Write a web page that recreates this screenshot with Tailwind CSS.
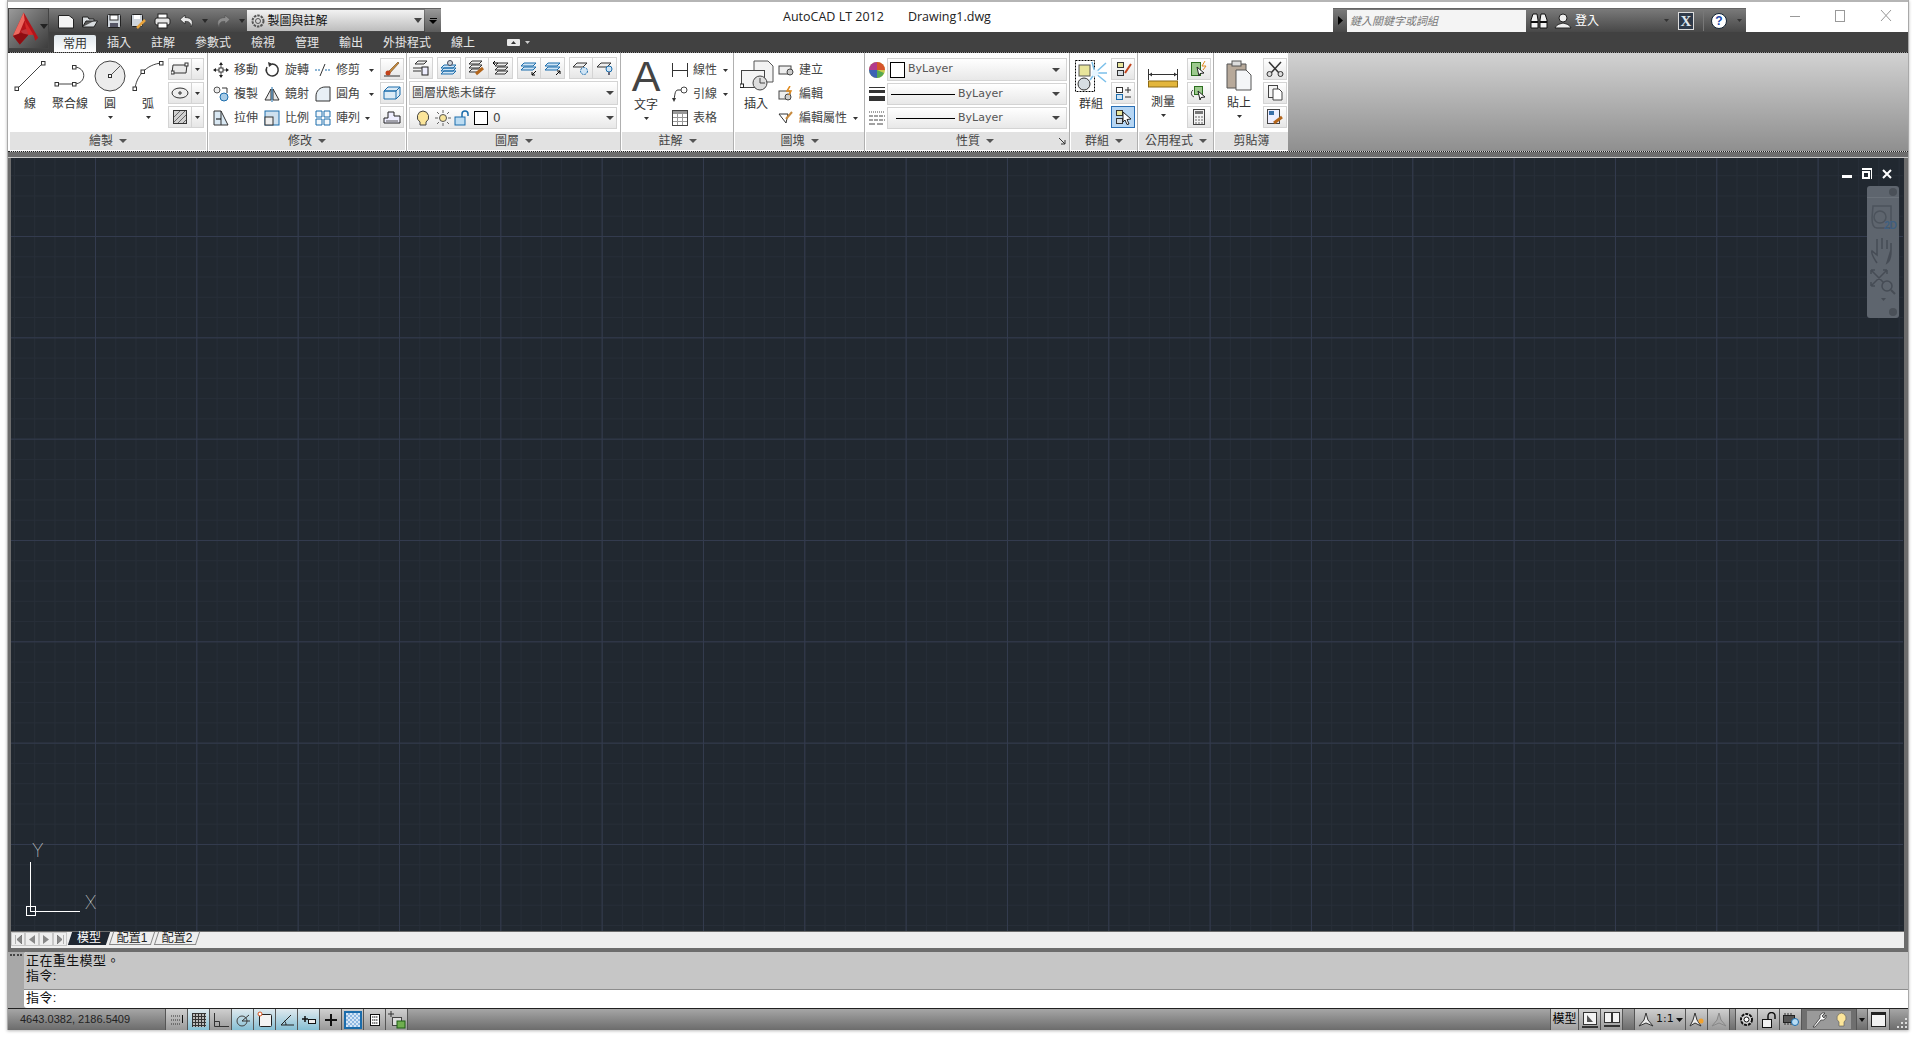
<!DOCTYPE html>
<html lang="zh-Hant">
<head>
<meta charset="UTF-8" />
<title>AutoCAD LT 2012</title>
<script src="https://cdn.jsdelivr.net/npm/@tailwindcss/browser@4"></script>
</head>
<body class="w-[1916px] h-[1038px] overflow-hidden bg-white pl-[7px] font-['Liberation_Sans','Noto_Sans_CJK_TC',sans-serif] text-[12px] text-[#333]">
<div class="w-[1902px] h-[1030px] flex flex-col border-x border-[#a9a9a9] bg-[#6c6c6c] shadow-[0_1px_3px_#bbb] relative">

  <!-- app button sits over the title and the tab row -->
  <div class="absolute left-0 top-[8px] w-[41px] h-[41px] z-10 bg-gradient-to-br from-[#9a9a9a] to-[#3d3d3d] border border-[#444] flex items-center pl-[3px]">
    <svg width="28" height="36" viewBox="0 0 28 36"><path d="M12 1L1 25L8 34L17 24H22L24 30L27 27Z" fill="#b5141a"/><path d="M12 1L1 25L6 26L13 9Z" fill="#ec6a60"/><path d="M9 20L17 17L21 24L13 25Z" fill="#f2f2f2" opacity=".15"/><path d="M1 25L8 34L17 24L9 22Z" fill="#8d0d12"/><path d="M13 9L22 24H17L14 16Z" fill="#d42a2a"/></svg>
    <svg width="8" height="5" class="ml-[1px] mb-[4px]"><path d="M0 0H8L4 5Z" fill="#222"/></svg>
  </div>

  <!-- title bar -->
  <header class="h-[32px] bg-white border-t-2 border-[#b5b5b5] flex shrink-0">
    <div class="ml-[41px] mt-[6px] h-[24px] w-[392px] bg-gradient-to-b from-[#7a7a7a] to-[#454545] border-t border-[#666] flex items-center">
      <div class="flex items-center w-[198px] pl-[9px] gap-[8px]">
        <svg width="16" height="16" viewBox="0 0 16 16"><path d="M.5 2.500H11L15.500 6V15H.5Z" fill="#f4f4f4" stroke="#222"/></svg>
        <svg width="16" height="16" viewBox="0 0 16 16"><path d="M.5 14V4H6L7 6H12V8H4L.5 14H12L15.500 8H12" fill="#d8dcdf" stroke="#222"/></svg>
        <svg width="16" height="16" viewBox="0 0 16 16"><rect x="1.500" y="1.500" width="13" height="13" rx="1" fill="#cfd5dc" stroke="#222"/><rect x="4" y="2" width="8" height="5" fill="#fff" stroke="#333"/><rect x="4" y="10" width="8" height="4" fill="#556"/></svg>
        <svg width="16" height="16" viewBox="0 0 16 16"><rect x="1.500" y="1.500" width="11" height="12" rx="1" fill="#cfd5dc" stroke="#222"/><rect x="4" y="2" width="6" height="4" fill="#fff"/><path d="M7 15L15 7" stroke="#e8a33c" stroke-width="2.500"/></svg>
        <svg width="17" height="16" viewBox="0 0 17 16"><rect x="4" y="1" width="9" height="5" fill="#fff" stroke="#222"/><rect x="1" y="5" width="15" height="7" rx="2" fill="#e4e4e4" stroke="#222"/><rect x="4" y="10" width="9" height="5" fill="#fff" stroke="#222"/></svg>
        <svg width="15" height="14" viewBox="0 0 15 14"><path d="M6 1L1 5.500L6 10V7.500C10 7 12 9 12 13C15 8 13 3.500 6 3.500Z" fill="#e8e8e8" stroke="#222" stroke-width=".7"/></svg>
        <svg width="6" height="4"><path d="M0 0H6L3 4Z" fill="#2a2a2a"/></svg>
        <svg width="15" height="14" viewBox="0 0 15 14"><path d="M9 1L14 5.500L9 10V7.500C5 7 3 9 3 13C0 8 2 3.500 9 3.500Z" fill="#8c8c8c" stroke="#555" stroke-width=".7"/></svg>
        <svg width="6" height="4"><path d="M0 0H6L3 4Z" fill="#2a2a2a"/></svg>
      </div>
      <div class="w-[178px] h-[21px] bg-gradient-to-b from-[#f2f2f2] to-[#bdbdbd] flex items-center pl-[3px]">
        <svg width="16" height="16" viewBox="0 0 16 16"><circle cx="8" cy="8" r="5.500" fill="none" stroke="#555" stroke-width="2" stroke-dasharray="2.500 1"/><circle cx="8" cy="8" r="2.500" fill="none" stroke="#555"/></svg>
        <span class="ml-[2px] text-[#111] grow">製圖與註解</span>
        <svg width="8" height="5" class="mr-[2px]"><path d="M0 0H8L4 5Z" fill="#444"/></svg>
      </div>
      <div class="w-[16px] h-[23px] bg-gradient-to-b from-[#999] to-[#5c5c5c] flex flex-col items-center justify-center gap-[1px] ml-[1px]">
        <div class="w-[7px] h-[1px] bg-black"></div>
        <svg width="8" height="4"><path d="M0 0H8L4 4Z" fill="#000"/></svg>
      </div>
    </div>
    <div class="ml-[342px] mt-[5px] text-[#222] font-['Open_Sans',sans-serif] text-[12.5px] leading-[20px]">AutoCAD LT 2012</div>
    <div class="ml-[24px] mt-[5px] text-[#222] font-['Open_Sans',sans-serif] text-[12.5px] leading-[20px]">Drawing1.dwg</div>
    <div class="ml-auto mt-[6px] w-[413px] h-[24px] bg-gradient-to-b from-[#7a7a7a] to-[#484848] border-t border-[#666] flex items-center">
      <div class="w-[14px] flex justify-center"><svg width="5" height="9"><path d="M0 0L5 4.500L0 9Z" fill="#000"/></svg></div>
      <div class="w-[179px] h-[22px] bg-[#f4f4f4] italic text-[#777] pl-[3px] leading-[22px] text-[11px]">鍵入關鍵字或詞組</div>
      <svg width="18" height="16" viewBox="0 0 18 16" class="ml-[4px]"><path d="M1 15V7L3 1H7L8 7V15ZM10 15V7L11 1H15L17 7V15Z" fill="#f2f2f2" stroke="#111"/><path d="M1 9H8M10 9H17" stroke="#111" stroke-width="2"/></svg>
      <svg width="18" height="18" viewBox="0 0 18 18" class="ml-[6px]"><circle cx="9" cy="6" r="4" fill="#eee" stroke="#222"/><path d="M1 16C3 12 6 12 9 11C12 12 15 12 17 16Z" fill="#eee" stroke="#222"/></svg>
      <span class="ml-[3px] text-[#fff] text-[12px]">登入</span>
      <svg width="5" height="3" class="ml-[65px]"><path d="M0 0H5L2.500 3Z" fill="#333"/></svg>
      <div class="ml-[9px] w-[16px] h-[18px] bg-[#2f3a4a] border border-[#ddd] text-[#dfe6ee] font-bold text-[15px] leading-[16px] text-center font-['Liberation_Serif',serif]">X</div>
      <div class="ml-[9px] w-px h-[20px] bg-[#777]"></div>
      <div class="ml-[7px] w-[16px] h-[16px] rounded-full bg-white border border-[#123] text-[#1c47a8] font-bold text-[12px] leading-[14px] text-center">?</div>
      <svg width="5" height="3" class="ml-[10px]"><path d="M0 0H5L2.500 3Z" fill="#333"/></svg>
    </div>
    <div class="ml-[41px] mr-[11px] mt-[4px] flex">
      <svg width="45" height="20" viewBox="0 0 45 20"><path d="M3 10.500H13" stroke="#999"/></svg>
      <svg width="45" height="20" viewBox="0 0 45 20"><rect x="3.500" y="4.500" width="9" height="11" fill="none" stroke="#999"/></svg>
      <svg width="20" height="20" viewBox="0 0 20 20"><path d="M4 4L14 15M14 4L4 15" stroke="#999"/></svg>
    </div>
  </header>

  <!-- tab row -->
  <nav class="h-[20px] bg-[#414141] flex shrink-0 text-[#e6e6e6] text-[12px] leading-[22px]">
    <div class="ml-[46px] mt-[3px] w-[42px] h-[17px] leading-[18px] text-center bg-gradient-to-b from-[#dfe7ec] to-white text-[#333] rounded-t-[2px]">常用</div>
    <div class="ml-[11px] w-[24px]">插入</div>
    <div class="ml-[20px] w-[24px]">註解</div>
    <div class="ml-[20px] w-[36px]">參數式</div>
    <div class="ml-[20px] w-[24px]">檢視</div>
    <div class="ml-[20px] w-[24px]">管理</div>
    <div class="ml-[20px] w-[24px]">輸出</div>
    <div class="ml-[20px] w-[48px]">外掛程式</div>
    <div class="ml-[20px] w-[24px]">線上</div>
    <div class="ml-[32px] flex items-center gap-[5px]">
      <div class="w-[13px] h-[7px] bg-[#e8e8e8] rounded-[1px] flex items-center justify-center"><svg width="5" height="3"><path d="M0 3H5L2.500 0Z" fill="#333"/></svg></div>
      <svg width="5" height="3"><path d="M0 0H5L2.500 3Z" fill="#ccc"/></svg>
    </div>
  </nav>

  <!-- ribbon -->
  <div class="h-[100px] shrink-0 border-y border-dotted border-[#222] bg-gradient-to-b from-[#d2d2d2] to-[#8f8f8f] flex">

    <!-- 繪製 -->
    <section class="w-[198px] flex flex-col bg-white">
      <div class="h-[79px] flex">
        <div class="w-[44px] pt-[7px] flex flex-col items-center">
          <svg width="32" height="32" viewBox="0 0 32 32"><path d="M3 29L29 3" stroke="#444"/><rect x="1" y="27" width="3.500" height="3.500" fill="#fff" stroke="#333"/><rect x="27.500" y="1.500" width="3.500" height="3.500" fill="#fff" stroke="#333"/></svg>
          <span class="mt-[4px] leading-[16px]">線</span>
        </div>
        <div class="w-[36px] pt-[7px] flex flex-col items-center">
          <svg width="32" height="32" viewBox="0 0 32 32"><path d="M3 24H20M20 7C33 7 33 24 20 24" fill="none" stroke="#444"/><rect x="1" y="22.500" width="3.500" height="3.500" fill="#fff" stroke="#333"/><rect x="18.500" y="22.500" width="3.500" height="3.500" fill="#fff" stroke="#333"/><rect x="18.500" y="5.500" width="3.500" height="3.500" fill="#fff" stroke="#333"/></svg>
          <span class="mt-[4px] leading-[16px] whitespace-nowrap">聚合線</span>
        </div>
        <div class="w-[44px] pt-[7px] flex flex-col items-center">
          <svg width="32" height="32" viewBox="0 0 32 32"><circle cx="16" cy="16" r="15" fill="#ececec" stroke="#444"/><path d="M16 16L26 6" stroke="#555"/><rect x="14.500" y="14.500" width="3" height="3" fill="#fff" stroke="#333"/></svg>
          <span class="mt-[4px] leading-[16px]">圓</span>
          <svg width="5" height="3" class="mt-[4px]"><path d="M0 0H5L2.500 3Z" fill="#333"/></svg>
        </div>
        <div class="w-[32px] pt-[7px] flex flex-col items-center">
          <svg width="32" height="32" viewBox="0 0 32 32"><path d="M3 29C4 17 14 4 30 3" fill="none" stroke="#444"/><rect x="1" y="27" width="3.500" height="3.500" fill="#fff" stroke="#333"/><rect x="9" y="10" width="3.500" height="3.500" fill="#fff" stroke="#333"/><rect x="27.500" y="1.500" width="3.500" height="3.500" fill="#fff" stroke="#333"/></svg>
          <span class="mt-[4px] leading-[16px]">弧</span>
          <svg width="5" height="3" class="mt-[4px]"><path d="M0 0H5L2.500 3Z" fill="#333"/></svg>
        </div>
        <div class="ml-[4px] pt-[5px] flex flex-col gap-[2px]">
          <div class="flex w-[36px] h-[22px] border border-[#d4d4d4] bg-gradient-to-b from-white to-[#e6e6e6]">
            <div class="w-[23px] border-r border-[#d4d4d4] flex items-center justify-center"><svg width="18" height="14" viewBox="0 0 18 14"><path d="M2 3H16L15 11H1Z" fill="#e8e8e8" stroke="#333"/><rect x="14" y="1" width="3" height="3" fill="#fff" stroke="#333"/><rect x="0" y="9" width="3" height="3" fill="#fff" stroke="#333"/></svg></div>
            <div class="grow flex items-center justify-center"><svg width="5" height="3"><path d="M0 0H5L2.500 3Z" fill="#333"/></svg></div>
          </div>
          <div class="flex w-[36px] h-[22px] border border-[#d4d4d4] bg-gradient-to-b from-white to-[#e6e6e6]">
            <div class="w-[23px] border-r border-[#d4d4d4] flex items-center justify-center"><svg width="18" height="14" viewBox="0 0 18 14"><ellipse cx="9" cy="7" rx="8" ry="5" fill="#eee" stroke="#333"/><path d="M7 7H11M9 5V9" stroke="#333"/></svg></div>
            <div class="grow flex items-center justify-center"><svg width="5" height="3"><path d="M0 0H5L2.500 3Z" fill="#333"/></svg></div>
          </div>
          <div class="flex w-[36px] h-[22px] border border-[#d4d4d4] bg-gradient-to-b from-white to-[#e6e6e6]">
            <div class="w-[23px] border-r border-[#d4d4d4] flex items-center justify-center"><svg width="18" height="18" viewBox="0 0 18 18"><rect x="2.500" y="2.500" width="13" height="13" fill="#cfcfcf" stroke="#333"/><path d="M3 9L9 3M3 14L14 3M7 15L15 7M12 15L15 12" stroke="#666"/></svg></div>
            <div class="grow flex items-center justify-center"><svg width="5" height="3"><path d="M0 0H5L2.500 3Z" fill="#333"/></svg></div>
          </div>
        </div>
      </div>
      <div class="h-[18px] ml-[2px] bg-[#e2e2e2] flex items-center justify-center gap-[6px] text-[#444]">繪製<svg width="8" height="4"><path d="M0 0H8L4 4Z" fill="#555"/></svg></div>
    </section>
    <div class="w-[3px] bg-white flex justify-center"><div class="w-px bg-[#b0b0b0]"></div></div>

    <!-- 修改 -->
    <section class="w-[196px] flex flex-col bg-white">
      <div class="h-[79px] flex pl-[4px] pt-[5px]">
        <div class="flex flex-col w-[167px] text-[#444]">
          <div class="h-[24px] flex items-center">
            <svg width="16" height="16" viewBox="0 0 16 16" class="mr-[5px]"><path d="M8 1V15M1 8H15" stroke="#444"/><path d="M8 0L6 3H10ZM8 16L6 13H10ZM0 8L3 6V10ZM16 8L13 6V10Z" fill="#222"/><rect x="6" y="6" width="4" height="4" fill="#fff" stroke="#333"/></svg>
            <span class="w-[30px]">移動</span>
            <svg width="16" height="16" viewBox="0 0 16 16" class="mr-[5px]"><path d="M8 2A6 6 0 1 1 3 5" fill="none" stroke="#333" stroke-width="1.500"/><path d="M4 0L9 2L5 5Z" fill="#333"/></svg>
            <span class="w-[30px]">旋轉</span>
            <svg width="16" height="16" viewBox="0 0 16 16" class="mr-[5px]"><path d="M0 8H6M10 8H16" stroke="#1b6cab" stroke-dasharray="2 1"/><path d="M5 14L10 2" stroke="#333"/></svg>
            <span>修剪</span>
            <svg width="5" height="3" class="ml-[9px]"><path d="M0 0H5L2.500 3Z" fill="#333"/></svg>
          </div>
          <div class="h-[24px] flex items-center">
            <svg width="16" height="16" viewBox="0 0 16 16" class="mr-[5px]"><circle cx="4" cy="4" r="3" fill="#eee" stroke="#555"/><circle cx="11" cy="11" r="4" fill="#a7cbe6" stroke="#1b6cab"/><path d="M9 2H14V7" fill="none" stroke="#333"/></svg>
            <span class="w-[30px]">複製</span>
            <svg width="16" height="16" viewBox="0 0 16 16" class="mr-[5px]"><path d="M1 14L7 3V14ZM9 3L15 14H9Z" fill="#e8e8e8" stroke="#333"/><path d="M8 1V16" stroke="#1b6cab"/></svg>
            <span class="w-[30px]">鏡射</span>
            <svg width="16" height="16" viewBox="0 0 16 16" class="mr-[5px]"><path d="M1 15V10C1 5 5 1 10 1H15V15Z" fill="#e8f0f6" stroke="#333"/></svg>
            <span>圓角</span>
            <svg width="5" height="3" class="ml-[9px]"><path d="M0 0H5L2.500 3Z" fill="#333"/></svg>
          </div>
          <div class="h-[24px] flex items-center">
            <svg width="16" height="16" viewBox="0 0 16 16" class="mr-[5px]"><path d="M1 1H8V15H1ZM8 1L15 15H8" fill="#d9e8f3" stroke="#333"/><path d="M3 9H8" stroke="#000"/></svg>
            <span class="w-[30px]">拉伸</span>
            <svg width="16" height="16" viewBox="0 0 16 16" class="mr-[5px]"><rect x="1" y="1" width="14" height="14" fill="#cfe1ef" stroke="#1b6cab"/><rect x="1" y="7" width="8" height="8" fill="#eee" stroke="#333"/></svg>
            <span class="w-[30px]">比例</span>
            <svg width="16" height="16" viewBox="0 0 16 16" class="mr-[5px]"><path d="M1 1H7V7H1ZM9 1H15V7H9ZM1 9H7V15H1ZM9 9H15V15H9Z" fill="#f4f8fb" stroke="#1b6cab"/></svg>
            <span>陣列</span>
            <svg width="5" height="3" class="ml-[5px]"><path d="M0 0H5L2.500 3Z" fill="#333"/></svg>
          </div>
        </div>
        <div class="flex flex-col gap-[2px]">
          <div class="w-[24px] h-[22px] border border-[#d4d4d4] bg-gradient-to-b from-white to-[#e6e6e6] flex items-center justify-center"><svg width="18" height="18" viewBox="0 0 18 18"><path d="M5 12L15 2L16 3L7 13Z" fill="#c78a3e" stroke="#6b4513" stroke-width=".6"/><circle cx="5" cy="13" r="2.500" fill="#c2431b"/><path d="M1 16H17" stroke="#333"/></svg></div>
          <div class="w-[24px] h-[22px] border border-[#d4d4d4] bg-gradient-to-b from-white to-[#e6e6e6] flex items-center justify-center"><svg width="18" height="16" viewBox="0 0 18 16"><path d="M1 6L5 2H17L13 6ZM1 6H13V14H1ZM13 6L17 2V10L13 14" fill="#dcebf6" stroke="#1b6cab"/></svg></div>
          <div class="w-[24px] h-[22px] border border-[#d4d4d4] bg-gradient-to-b from-white to-[#e6e6e6] flex items-center justify-center"><svg width="18" height="16" viewBox="0 0 18 16"><path d="M1 14V9H5V3H11V7H17V14Z" fill="#eef" stroke="#222"/><path d="M3 12H15" stroke="#555"/></svg></div>
        </div>
      </div>
      <div class="h-[18px] bg-[#e2e2e2] flex items-center justify-center gap-[6px] text-[#444]">修改<svg width="8" height="4"><path d="M0 0H8L4 4Z" fill="#555"/></svg></div>
    </section>
    <div class="w-[3px] bg-white flex justify-center"><div class="w-px bg-[#b0b0b0]"></div></div>

    <!-- 圖層 -->
    <section class="w-[212px] flex flex-col bg-white">
      <div class="h-[79px] pl-[1px] pt-[4px] flex flex-col">
        <div class="flex h-[22px] gap-[4px]">
          <div class="w-[24px] border border-[#d4d4d4] bg-gradient-to-b from-white to-[#e6e6e6] flex items-center justify-center"><svg width="18" height="16" viewBox="0 0 18 16"><path d="M3 4L6 1H15L12 4ZM1 8H11M1 11H9" fill="#eee" stroke="#333"/><rect x="10" y="7" width="6" height="8" fill="#eef" stroke="#222"/></svg></div>
          <div class="w-[24px] border border-[#d4d4d4] bg-gradient-to-b from-white to-[#e6e6e6] flex items-center justify-center"><svg width="18" height="16" viewBox="0 0 18 16"><path d="M1 14L4 11H16L13 14ZM1 11L4 8H16L13 11ZM1 8L4 5H16L13 8Z" fill="#cfe4f5" stroke="#1b6cab"/><circle cx="10" cy="3" r="2.500" fill="#cfd8de" stroke="#445"/></svg></div>
          <div class="flex">
            <div class="w-[24px] border border-[#d4d4d4] bg-gradient-to-b from-white to-[#e6e6e6] flex items-center justify-center"><svg width="18" height="16" viewBox="0 0 18 16"><path d="M1 12L4 9H14L11 12ZM1 8L4 5H14L11 8ZM1 4L4 1H14L11 4Z" fill="#eee" stroke="#333"/><path d="M8 14L15 8" stroke="#b3651b" stroke-width="3"/></svg></div>
            <div class="w-[24px] border-y border-r border-[#d4d4d4] bg-gradient-to-b from-white to-[#e6e6e6] flex items-center justify-center"><svg width="18" height="16" viewBox="0 0 18 16"><path d="M3 14L6 11H16L13 14ZM3 10L6 7H16L13 10ZM3 6L6 3H16L13 6Z" fill="#eee" stroke="#333"/><path d="M1 3H6M1 3L3 1M1 3L3 5" stroke="#000" fill="none"/></svg></div>
          </div>
          <div class="flex">
            <div class="w-[24px] border border-[#d4d4d4] bg-gradient-to-b from-white to-[#e6e6e6] flex items-center justify-center"><svg width="18" height="16" viewBox="0 0 18 16"><path d="M1 6L4 3H16L13 6ZM1 10L4 7H16L13 10Z" fill="#cfe4f5" stroke="#1b6cab"/><path d="M16 11L12 15M12 12V15H15" stroke="#000" fill="none"/></svg></div>
            <div class="w-[24px] border-y border-r border-[#d4d4d4] bg-gradient-to-b from-white to-[#e6e6e6] flex items-center justify-center"><svg width="18" height="16" viewBox="0 0 18 16"><path d="M1 6L4 3H16L13 6ZM1 10L4 7H16L13 10Z" fill="#cfe4f5" stroke="#1b6cab"/><path d="M12 15L16 11M13 11H16V14" stroke="#000" fill="none"/></svg></div>
          </div>
          <div class="flex">
            <div class="w-[24px] border border-[#d4d4d4] bg-gradient-to-b from-white to-[#e6e6e6] flex items-center justify-center"><svg width="18" height="16" viewBox="0 0 18 16"><path d="M1 7L5 3H15L11 7Z" fill="#eee" stroke="#333"/><circle cx="12" cy="11" r="3.500" fill="#cfe4f5" stroke="#1b6cab" stroke-dasharray="2 1"/></svg></div>
            <div class="w-[24px] border-y border-r border-[#d4d4d4] bg-gradient-to-b from-white to-[#e6e6e6] flex items-center justify-center"><svg width="18" height="16" viewBox="0 0 18 16"><path d="M1 7L5 3H15L11 7Z" fill="#eee" stroke="#333"/><circle cx="13" cy="9" r="3" fill="#cfe4f5" stroke="#1b6cab"/><path d="M12 12H14V15H12Z" fill="#667"/></svg></div>
          </div>
        </div>
        <div class="mt-[2px] w-[209px] h-[24px] border border-[#d4d4d4] bg-gradient-to-b from-white to-[#e8e8e8] flex items-center pl-[2px] pr-[3px] justify-between text-[#444]">圖層狀態未儲存<svg width="8" height="4"><path d="M0 0H8L4 4Z" fill="#444"/></svg></div>
        <div class="mt-[2px] w-[208px] h-[22px] border border-[#d4d4d4] bg-gradient-to-b from-white to-[#e8e8e8] flex items-center pl-[6px] pr-[2px]">
          <svg width="14" height="17" viewBox="0 0 14 17"><path d="M7 1A6 6 0 0 1 10 12V15H4V12A6 6 0 0 1 7 1Z" fill="#fbe59a" stroke="#444"/></svg>
          <svg width="16" height="16" viewBox="0 0 16 16" class="ml-[5px]"><circle cx="8" cy="8" r="3.500" fill="#f7e49a" stroke="#555"/><path d="M8 0V3M8 13V16M0 8H3M13 8H16M2 2L4 4M12 12L14 14M14 2L12 4M4 12L2 14" stroke="#666"/></svg>
          <svg width="16" height="16" viewBox="0 0 16 16" class="ml-[3px]"><rect x="1" y="7" width="10" height="8" fill="#bcdcf2" stroke="#1b6cab"/><path d="M8 7V4A3 3 0 0 1 14 4V6" fill="none" stroke="#1b6cab" stroke-width="1.500"/></svg>
          <div class="ml-[4px] w-[14px] h-[14px] bg-white border border-black"></div>
          <span class="ml-[5px] text-[#444] font-['DejaVu_Sans',sans-serif]">0</span>
          <svg width="8" height="4" class="ml-auto"><path d="M0 0H8L4 4Z" fill="#444"/></svg>
        </div>
      </div>
      <div class="h-[18px] bg-[#e2e2e2] flex items-center justify-center gap-[6px] text-[#444]">圖層<svg width="8" height="4"><path d="M0 0H8L4 4Z" fill="#555"/></svg></div>
    </section>
    <div class="w-[2px] bg-white border-l border-[#b0b0b0]"></div>

    <!-- 註解 -->
    <section class="w-[111px] flex flex-col bg-white">
      <div class="h-[79px] flex">
        <div class="w-[48px] pt-[3px] flex flex-col items-center">
          <span class="font-['Liberation_Sans',sans-serif] text-[43px] leading-[40px] text-[#444]">A</span>
          <span class="mt-[1px] leading-[16px]">文字</span>
          <svg width="5" height="3" class="mt-[4px]"><path d="M0 0H5L2.500 3Z" fill="#333"/></svg>
        </div>
        <div class="flex flex-col pt-[5px] pl-[2px] text-[#444]">
          <div class="h-[24px] flex items-center"><svg width="16" height="14" viewBox="0 0 16 14" class="mr-[5px]"><path d="M.5 0V14M15.500 0V14M1 7.500H15" stroke="#333"/></svg>線性<svg width="5" height="3" class="ml-[6px]"><path d="M0 0H5L2.500 3Z" fill="#333"/></svg></div>
          <div class="h-[24px] flex items-center"><svg width="16" height="16" viewBox="0 0 16 16" class="mr-[5px]"><circle cx="12" cy="4" r="3" fill="#fff" stroke="#444"/><path d="M9 4H6C3 4 3 8 2 14" fill="none" stroke="#333"/><path d="M0 12L4 12L2 16Z" fill="#333"/></svg>引線<svg width="5" height="3" class="ml-[6px]"><path d="M0 0H5L2.500 3Z" fill="#333"/></svg></div>
          <div class="h-[24px] flex items-center"><svg width="16" height="16" viewBox="0 0 16 16" class="mr-[5px]"><rect x=".5" y=".5" width="15" height="15" fill="#fff" stroke="#444"/><rect x="1" y="1" width="14" height="3" fill="#999"/><path d="M1 7.500H15M1 11.500H15M5.500 4V15M10.500 4V15" stroke="#999"/></svg>表格</div>
        </div>
      </div>
      <div class="h-[18px] bg-[#e2e2e2] flex items-center justify-center gap-[6px] text-[#444]">註解<svg width="8" height="4"><path d="M0 0H8L4 4Z" fill="#555"/></svg></div>
    </section>
    <div class="w-[2px] bg-white border-l border-[#b0b0b0]"></div>

    <!-- 圖塊 -->
    <section class="w-[129px] flex flex-col bg-white">
      <div class="h-[79px] flex">
        <div class="w-[43px] pt-[7px] pl-[5px] flex flex-col">
          <svg width="34" height="32" viewBox="0 0 34 32"><path d="M14 1H28L33 6V22H14Z" fill="#f3f3f3" stroke="#555"/><rect x="1.500" y="10.500" width="23" height="17" fill="#f5f5f5" stroke="#444"/><circle cx="20" cy="23" r="7" fill="#ddd" stroke="#444"/><path d="M20 23V18M20 23H25" stroke="#444"/><rect x="0" y="24" width="3.500" height="3.500" fill="#fff" stroke="#222"/></svg>
          <span class="mt-[4px] pl-[4px] leading-[16px]">插入</span>
        </div>
        <div class="flex flex-col pt-[5px] text-[#444]">
          <div class="h-[24px] flex items-center"><svg width="16" height="14" viewBox="0 0 16 14" class="mr-[5px]"><rect x="1" y="3" width="12" height="8" fill="#eee" stroke="#444"/><circle cx="12" cy="9" r="3" fill="#ccc" stroke="#444"/></svg>建立</div>
          <div class="h-[24px] flex items-center"><svg width="16" height="16" viewBox="0 0 16 16" class="mr-[5px]"><rect x="1" y="5" width="11" height="8" fill="#eee" stroke="#444"/><circle cx="10" cy="11" r="3" fill="#ccc" stroke="#444"/><path d="M12 0L9 5H13L11 9" fill="none" stroke="#e08a1e" stroke-width="1.500"/></svg>編輯</div>
          <div class="h-[24px] flex items-center"><svg width="16" height="14" viewBox="0 0 16 14" class="mr-[5px]"><path d="M1 3H10L8 12Z" fill="#fff" stroke="#333"/><path d="M8 8L14 1" stroke="#c78a3e" stroke-width="2"/></svg>編輯屬性<svg width="5" height="3" class="ml-[6px]"><path d="M0 0H5L2.500 3Z" fill="#333"/></svg></div>
        </div>
      </div>
      <div class="h-[18px] bg-[#e2e2e2] flex items-center justify-center gap-[6px] text-[#444]">圖塊<svg width="8" height="4"><path d="M0 0H8L4 4Z" fill="#555"/></svg></div>
    </section>
    <div class="w-[2px] bg-white border-l border-[#b0b0b0]"></div>

    <!-- 性質 -->
    <section class="w-[203px] flex flex-col bg-white">
      <div class="h-[79px] pt-[5px] pl-[3px] flex flex-col gap-[2px] font-['DejaVu_Sans','Noto_Sans_CJK_TC',sans-serif] text-[#555] text-[11px]">
        <div class="flex items-center h-[23px]">
          <svg width="16" height="16" viewBox="0 0 16 16" class="mr-[2px]"><circle cx="8" cy="8" r="8" fill="#c9c94a"/><path d="M8 8L0 8A8 8 0 0 1 8 0Z" fill="#b23a8c"/><path d="M8 8V0A8 8 0 0 1 16 8Z" fill="#d6542a"/><path d="M8 8L0 8A8 8 0 0 0 8 16Z" fill="#3b62b5"/><path d="M8 8V16A8 8 0 0 0 15 11Z" fill="#55a852"/></svg>
          <div class="w-[180px] h-[23px] border border-[#d4d4d4] bg-gradient-to-b from-white to-[#e8e8e8] flex items-center pl-[2px] pr-[6px]">
            <div class="w-[15px] h-[16px] bg-white border border-black mr-[3px]"></div>ByLayer<svg width="8" height="4" class="ml-auto"><path d="M0 0H8L4 4Z" fill="#444"/></svg>
          </div>
        </div>
        <div class="flex items-center h-[22px]">
          <svg width="16" height="16" viewBox="0 0 16 16" class="mr-[2px]"><path d="M0 1.500H16" stroke="#333"/><rect x="0" y="4" width="16" height="3" fill="#333"/><rect x="0" y="10" width="16" height="5" fill="#333"/></svg>
          <div class="w-[180px] h-[22px] border border-[#d4d4d4] bg-gradient-to-b from-white to-[#e8e8e8] flex items-center pl-[3px] pr-[6px]">
            <div class="w-[64px] h-px bg-black mr-[3px]"></div>ByLayer<svg width="8" height="4" class="ml-auto"><path d="M0 0H8L4 4Z" fill="#444"/></svg>
          </div>
        </div>
        <div class="flex items-center h-[22px]">
          <svg width="16" height="14" viewBox="0 0 16 14" class="mr-[2px]"><path d="M0 1H16" stroke="#444" stroke-dasharray="1 1"/><path d="M0 5H16M0 9H16" stroke="#444" stroke-dasharray="4 1"/><path d="M0 13H16" stroke="#444" stroke-dasharray="6 2"/></svg>
          <div class="w-[180px] h-[22px] border border-[#d4d4d4] bg-gradient-to-b from-white to-[#e8e8e8] flex items-center pl-[8px] pr-[6px]">
            <div class="w-[59px] h-px bg-black mr-[3px]"></div>ByLayer<svg width="8" height="4" class="ml-auto"><path d="M0 0H8L4 4Z" fill="#444"/></svg>
          </div>
        </div>
      </div>
      <div class="h-[18px] bg-[#e2e2e2] flex items-center text-[#444] pl-[90px]">
        性質<svg width="8" height="4" class="ml-[6px]"><path d="M0 0H8L4 4Z" fill="#555"/></svg>
        <svg width="7" height="7" viewBox="0 0 7 7" class="ml-auto mr-[3px]"><path d="M0 0L6 6M6 2V6H2" fill="none" stroke="#333"/></svg>
      </div>
    </section>
    <div class="w-[2px] bg-white border-l border-[#b0b0b0]"></div>

    <!-- 群組 -->
    <section class="w-[66px] flex flex-col bg-white">
      <div class="h-[79px] flex">
        <div class="w-[40px] pt-[7px] pl-[4px] flex flex-col">
          <svg width="32" height="33" viewBox="0 0 32 33"><rect x=".5" y=".5" width="19" height="31" fill="none" stroke="#000" stroke-dasharray="2 1"/><rect x="4" y="5" width="11" height="11" fill="#e8e59b" stroke="#555"/><circle cx="9" cy="24" r="6" fill="#d6dde2" stroke="#333"/><path d="M20 13L31 3M20 13L32 13M20 13L31 22M20 13L17 2M20 13L15 20" stroke="#7cc0ea" stroke-width="1.500"/><circle cx="20" cy="13" r="3.500" fill="#e6f5ff"/></svg>
          <span class="mt-[3px] pl-[4px] leading-[16px]">群組</span>
        </div>
        <div class="flex flex-col gap-[2px] pt-[5px]">
          <div class="w-[24px] h-[22px] border border-[#d4d4d4] bg-gradient-to-b from-white to-[#e6e6e6] flex items-center justify-center"><svg width="18" height="16" viewBox="0 0 18 16"><rect x="3.500" y="1.500" width="6" height="5" fill="#e8e59b" stroke="#333"/><rect x="3.500" y="9.500" width="6" height="5" fill="#d6dde2" stroke="#333"/><path d="M11 12L17 3" stroke="#c2431b" stroke-width="2"/></svg></div>
          <div class="w-[24px] h-[22px] border border-[#d4d4d4] bg-gradient-to-b from-white to-[#e6e6e6] flex items-center justify-center"><svg width="18" height="16" viewBox="0 0 18 16"><rect x="2.500" y="2.500" width="6" height="5" fill="#fff" stroke="#333"/><rect x="2.500" y="9.500" width="6" height="5" fill="#cfe4f5" stroke="#1b6cab"/><path d="M11 5H17M14 2V8M11 12H17" stroke="#333"/></svg></div>
          <div class="w-[24px] h-[22px] border border-[#2a6fb5] bg-[#b6d6f4] flex items-center justify-center"><svg width="18" height="16" viewBox="0 0 18 16"><rect x="2.500" y="1.500" width="6" height="5" fill="#e8e59b" stroke="#333"/><rect x="2.500" y="9.500" width="6" height="5" fill="#d6dde2" stroke="#333"/><path d="M9 3L17 10L13 10.500L15 15L13 15.500L11 11L9 13Z" fill="#fff" stroke="#222"/></svg></div>
        </div>
      </div>
      <div class="h-[18px] bg-[#e2e2e2] flex items-center justify-center gap-[6px] text-[#444]">群組<svg width="8" height="4"><path d="M0 0H8L4 4Z" fill="#555"/></svg></div>
    </section>
    <div class="w-[2px] bg-white border-l border-[#b0b0b0]"></div>

    <!-- 公用程式 -->
    <section class="w-[74px] flex flex-col bg-white">
      <div class="h-[79px] flex">
        <div class="w-[48px] flex flex-col items-center pt-[15px]">
          <svg width="30" height="20" viewBox="0 0 30 20"><path d="M.5 1V12M29.500 1V12M1 6.500H29" stroke="#333"/><path d="M1 6.500L4 4.500V8.500ZM29 6.500L26 4.500V8.500Z" fill="#333"/><rect x=".5" y="13" width="29" height="6" fill="#e3b63c" stroke="#8c6a14"/></svg>
          <span class="mt-[6px] leading-[16px]">測量</span>
          <svg width="5" height="3" class="mt-[4px]"><path d="M0 0H5L2.500 3Z" fill="#333"/></svg>
        </div>
        <div class="flex flex-col gap-[2px] pt-[5px]">
          <div class="w-[24px] h-[22px] border border-[#d4d4d4] bg-gradient-to-b from-white to-[#e6e6e6] flex items-center justify-center"><svg width="18" height="16" viewBox="0 0 18 16"><rect x="1.500" y="1.500" width="9" height="13" fill="#9cc98d" stroke="#2c6d1f"/><path d="M7 6L14 12L10 12.500L9 15Z" fill="#fff" stroke="#222"/><path d="M15 0L12 5H16L13 9" fill="none" stroke="#e08a1e"/></svg></div>
          <div class="w-[24px] h-[22px] border border-[#d4d4d4] bg-gradient-to-b from-white to-[#e6e6e6] flex items-center justify-center"><svg width="18" height="16" viewBox="0 0 18 16"><rect x="4.500" y="1.500" width="8" height="8" fill="#9cc98d" stroke="#2c6d1f"/><path d="M4 12A4 4 0 0 1 3 5" fill="none" stroke="#444"/><path d="M8 6L15 12L11 12.500L10 15Z" fill="#fff" stroke="#222"/></svg></div>
          <div class="w-[24px] h-[22px] border border-[#d4d4d4] bg-gradient-to-b from-white to-[#e6e6e6] flex items-center justify-center"><svg width="14" height="16" viewBox="0 0 14 16"><rect x="1.500" y=".5" width="11" height="15" fill="#f2f2f2" stroke="#444"/><rect x="3" y="2" width="8" height="3" fill="#777"/><path d="M3 8H11M3 11H11M3 14H11" stroke="#666" stroke-dasharray="2 1"/></svg></div>
        </div>
      </div>
      <div class="h-[18px] bg-[#e2e2e2] flex items-center justify-center gap-[6px] text-[#444]">公用程式<svg width="8" height="4"><path d="M0 0H8L4 4Z" fill="#555"/></svg></div>
    </section>
    <div class="w-[2px] bg-white border-l border-[#b0b0b0]"></div>

    <!-- 剪貼簿 -->
    <section class="w-[73px] flex flex-col bg-white">
      <div class="h-[79px] flex">
        <div class="w-[48px] flex flex-col items-center pt-[7px]">
          <svg width="28" height="31" viewBox="0 0 28 31"><path d="M2 4H21V28H2Z" fill="#b7a99a" stroke="#555"/><rect x="7" y="1" width="9" height="5" fill="#ddd" stroke="#555"/><path d="M11 10H21L26 15V30H11Z" fill="#f4f6f8" stroke="#555"/></svg>
          <span class="mt-[4px] leading-[16px]">貼上</span>
          <svg width="5" height="3" class="mt-[4px]"><path d="M0 0H5L2.500 3Z" fill="#333"/></svg>
        </div>
        <div class="flex flex-col gap-[2px] pt-[5px]">
          <div class="w-[24px] h-[22px] border border-[#d4d4d4] bg-gradient-to-b from-white to-[#e6e6e6] flex items-center justify-center"><svg width="18" height="16" viewBox="0 0 18 16"><path d="M3 1L13 12M15 1L5 12" stroke="#333" stroke-width="1.500"/><circle cx="3.500" cy="13" r="2.500" fill="#ddd" stroke="#333"/><circle cx="14.500" cy="13" r="2.500" fill="#ddd" stroke="#333"/></svg></div>
          <div class="w-[24px] h-[22px] border border-[#d4d4d4] bg-gradient-to-b from-white to-[#e6e6e6] flex items-center justify-center"><svg width="16" height="16" viewBox="0 0 16 16"><rect x="1.500" y=".5" width="9" height="12" fill="#f4f4f4" stroke="#444"/><path d="M6 4H12L15 7V15H6Z" fill="#fff" stroke="#444"/></svg></div>
          <div class="w-[24px] h-[22px] border border-[#d4d4d4] bg-gradient-to-b from-white to-[#e6e6e6] flex items-center justify-center"><svg width="18" height="18" viewBox="0 0 18 18"><rect x="1.500" y="1.500" width="12" height="14" fill="#eef" stroke="#444"/><rect x="3" y="3" width="5" height="4" fill="#3a6fa8"/><path d="M8 15L16 9" stroke="#b3651b" stroke-width="3"/></svg></div>
        </div>
      </div>
      <div class="h-[18px] bg-[#e2e2e2] flex items-center justify-center text-[#444]">剪貼簿</div>
    </section>
  </div>

  <!-- drawing area -->
  <div class="h-[6px] shrink-0 border-b border-[#c8c8c8]"></div>
  <main class="ml-[3px] mr-[4px] h-[773px] bg-[#212830] relative shrink-0 overflow-hidden">
    <svg width="1892" height="773" class="absolute inset-0" shape-rendering="crispEdges">
      <defs>
        <pattern id="minor" x="2.94" y="17.2" width="20.266" height="20.266" patternUnits="userSpaceOnUse"><path d="M0 .5H20.266M.5 0V20.266" stroke="#272e38" fill="none"/></pattern>
        <pattern id="major" x="84" y="78" width="101.33" height="101.33" patternUnits="userSpaceOnUse"><path d="M0 .5H101.33M.5 0V101.33" stroke="#333b4e" fill="none"/></pattern>
      </defs>
      <rect width="1892" height="773" fill="url(#minor)"/>
      <rect width="1892" height="773" fill="url(#major)"/>
      <path d="M19.500 704V753.500H69" fill="none" stroke="#fff"/>
      <rect x="15.500" y="748.500" width="9" height="9" fill="none" stroke="#fff"/>
    </svg>
    <span class="absolute left-[21px] top-[684px] text-[18px] leading-[18px] font-thin text-white font-['Inter',sans-serif]">Y</span>
    <span class="absolute left-[74px] top-[736px] text-[18px] leading-[18px] font-thin text-white font-['Inter',sans-serif]">X</span>
    <!-- viewport controls -->
    <div class="absolute right-[12px] top-[10px] flex items-center gap-[10px]">
      <div class="w-[10px] h-[3px] mt-[5px] bg-white"></div>
      <div class="relative w-[10px] h-[11px] border-t-2 border-r border-white"><div class="absolute left-0 bottom-0 w-[8px] h-[8px] border-2 border-white"></div></div>
      <svg width="10" height="10" viewBox="0 0 10 10"><path d="M1 1L9 9M9 1L1 9" stroke="#fff" stroke-width="2"/></svg>
    </div>
    <!-- navigation bar -->
    <div class="absolute left-[1856px] top-[28px] w-[32px] h-[132px] rounded-[3px] bg-[#5e656e] flex flex-col items-center">
      <div class="h-[12px] w-full border-b border-[#6b727a] flex justify-end pr-[2px] pt-[2px]"><div class="w-[8px] h-[8px] rounded-full bg-[#4a5058]"></div></div>
      <div class="relative w-[28px] h-[30px] mt-[6px]">
        <svg width="28" height="30" viewBox="0 0 28 30"><path d="M4 2H22V24H8C5 24 3 20 3 14Z" fill="none" stroke="#4c535c" stroke-width="1.500"/><circle cx="11" cy="13" r="6" fill="none" stroke="#4c535c" stroke-width="1.500"/></svg>
        <span class="absolute right-0 bottom-[3px] text-[10px] leading-[10px] font-bold text-[#3f5f80]">2D</span>
      </div>
      <svg width="26" height="28" viewBox="0 0 26 28" class="mt-[3px]"><path d="M7 26C3 20 1 16 2 14L7 18V5M7 12V2M12 12V1M17 12V3M21 13V6L21 14C21 20 20 24 17 26Z" fill="none" stroke="#464c55" stroke-width="1.500"/></svg>
      <svg width="26" height="26" viewBox="0 0 26 26" class="mt-[4px]"><path d="M1 1L16 16M17 1L1 17M1 1H5M1 1V5M17 1H13M17 1V5M1 17H5M1 17V13" fill="none" stroke="#464c55" stroke-width="1.500"/><circle cx="17" cy="17" r="5" fill="#5e656e" stroke="#464c55" stroke-width="1.500"/><path d="M21 21L25 25" stroke="#464c55" stroke-width="2"/></svg>
      <svg width="5" height="3" class="mt-[3px]"><path d="M0 0H5L2.500 3Z" fill="#464c55"/></svg>
      <div class="mt-auto mb-[2px] mr-[-20px] w-[8px] h-[8px] rounded-full bg-[#4a5058]"></div>
    </div>
  </main>

  <!-- layout tabs -->
  <div class="ml-[3px] mr-[4px] mt-[1px] h-[16px] bg-[#eeeeee] flex shrink-0 text-[#222] leading-[13px]">
    <div class="w-[14px] h-[14px] border border-[#c8c8c8] flex items-center justify-center"><svg width="7" height="9"><path d="M0 0V9M7 0V9L2 4.500Z" stroke="#777" fill="#888"/></svg></div>
    <div class="w-[14px] h-[14px] border border-[#c8c8c8] flex items-center justify-center"><svg width="6" height="9"><path d="M6 0V9L0 4.500Z" fill="#888"/></svg></div>
    <div class="w-[14px] h-[14px] border border-[#c8c8c8] flex items-center justify-center"><svg width="6" height="9"><path d="M0 0V9L6 4.500Z" fill="#888"/></svg></div>
    <div class="w-[14px] h-[14px] border border-[#c8c8c8] flex items-center justify-center"><svg width="7" height="9"><path d="M7 0V9M0 0V9L5 4.500Z" stroke="#777" fill="#888"/></svg></div>
    <div class="ml-[3px] w-[38px] h-[13px] -skew-x-[18deg] bg-[#1f2630] text-white text-center"><div class="skew-x-[18deg]">模型</div></div>
    <div class="ml-[3px] w-[42px] h-[13px] -skew-x-[18deg] border-x border-b border-[#888] text-center"><div class="skew-x-[18deg]">配置1</div></div>
    <div class="ml-[3px] w-[42px] h-[13px] -skew-x-[18deg] border-x border-b border-[#888] text-center"><div class="skew-x-[18deg]">配置2</div></div>
  </div>

  <!-- command line -->
  <div class="h-[4px] shrink-0"></div>
  <div class="h-[56px] shrink-0 flex bg-[#a8a8a8]">
    <div class="w-[16px] pt-[2px] pl-[2px]"><div class="w-[12px] border-t-2 border-dotted border-[#444]"></div></div>
    <div class="grow flex flex-col bg-white rounded-l-[3px]">
      <div class="h-[38px] bg-[#c6c6c6] border-b border-[#8d8d8d] pl-[2px] pt-[1px] text-[#111] text-[13px] leading-[15px] tracking-[0.4px] rounded-tl-[3px]">正在重生模型。<br>指令:</div>
      <div class="grow pl-[2px] pt-[1px] text-[#111] text-[13px] leading-[14px] tracking-[0.4px]">指令:</div>
    </div>
  </div>

  <!-- status bar -->
  <footer class="h-[22px] shrink-0 border-t border-[#222] bg-gradient-to-b from-[#a6a6a6] to-[#6c6c6c] flex text-[#222]">
    <div class="w-[158px] pl-[12px] leading-[21px] text-[11px] border-r border-[#555]">4643.0382, 2186.5409</div>
    <div class="w-[22px] border-r border-[#555] bg-gradient-to-b from-[#cfcfcf] to-[#9a9a9a] flex items-center justify-center"><svg width="14" height="12" viewBox="0 0 14 12"><path d="M1 2H11M1 6H11M1 10H11" stroke="#333" stroke-dasharray="1 1"/><path d="M12.500 1V9" stroke="#111"/></svg></div>
    <div class="w-[22px] border-r border-[#555] bg-gradient-to-b from-[#dfe9ee] to-[#85bfd4] flex items-center justify-center"><svg width="16" height="16" viewBox="0 0 16 16"><rect x="1" y="1" width="14" height="14" fill="#bbb"/><path d="M1 1.500H15M1 4.500H15M1 7.500H15M1 10.500H15M1 13.500H15M1.500 1V15M4.500 1V15M7.500 1V15M10.500 1V15M13.500 1V15" stroke="#333"/></svg></div>
    <div class="w-[22px] border-r border-[#555] bg-gradient-to-b from-[#cfcfcf] to-[#9a9a9a] flex items-end justify-center pb-[2px]"><svg width="16" height="16" viewBox="0 0 16 16"><path d="M1.500 1V14.500H16M1 9.500H6.500V15" fill="none" stroke="#333"/></svg></div>
    <div class="w-[22px] border-r border-[#555] bg-gradient-to-b from-[#dfe9ee] to-[#85bfd4] flex items-center justify-center"><svg width="16" height="16" viewBox="0 0 16 16"><circle cx="7" cy="9" r="5" fill="none" stroke="#444"/><path d="M7 9L14 3M7 9H15" stroke="#333"/></svg></div>
    <div class="w-[22px] border-r border-[#555] bg-gradient-to-b from-[#dfe9ee] to-[#85bfd4] flex items-center justify-center"><svg width="16" height="17" viewBox="0 0 16 17"><rect x="2.500" y="3.500" width="12" height="12" rx="1" fill="#f3f3f3" stroke="#222"/><circle cx="3" cy="3" r="2" fill="#fff" stroke="#d8531c"/></svg></div>
    <div class="w-[22px] border-r border-[#555] bg-gradient-to-b from-[#dfe9ee] to-[#85bfd4] flex items-center justify-center"><svg width="14" height="12" viewBox="0 0 14 12"><path d="M11 1L1 11H14M6 11C6 9 5 7 4 7" fill="none" stroke="#222"/></svg></div>
    <div class="w-[22px] border-r border-[#555] bg-gradient-to-b from-[#dfe9ee] to-[#85bfd4] flex items-center justify-center"><svg width="14" height="10" viewBox="0 0 14 10"><path d="M0 4H6M3 1V7" stroke="#111" stroke-width="1.500"/><rect x="6.500" y="4.500" width="7" height="4" fill="#eee" stroke="#111"/></svg></div>
    <div class="w-[22px] border-r border-[#555] bg-gradient-to-b from-[#cfcfcf] to-[#9a9a9a] flex items-center justify-center"><svg width="14" height="14" viewBox="0 0 14 14"><path d="M7 1V13M1 7H13" stroke="#111" stroke-width="2"/></svg></div>
    <div class="w-[22px] border-r border-[#555] bg-gradient-to-b from-[#cfcfcf] to-[#9a9a9a] flex items-center justify-center"><div class="w-[18px] h-[18px] border-2 border-[#1b6cab] bg-[#9cc3e6] bg-[repeating-conic-gradient(#8fb8e2_0_25%,#d5e6f6_0_50%)] bg-size-[4px_4px]"></div></div>
    <div class="w-[22px] border-r border-[#555] bg-gradient-to-b from-[#cfcfcf] to-[#9a9a9a] flex items-center justify-center"><svg width="10" height="12" viewBox="0 0 10 12"><rect x=".5" y=".5" width="9" height="11" fill="#fff" stroke="#111"/><path d="M2 3H8M2 6H8M2 9H8" stroke="#111" stroke-dasharray="1.500 .5"/></svg></div>
    <div class="w-[22px] border-r border-[#555] bg-gradient-to-b from-[#cfcfcf] to-[#9a9a9a] flex items-center justify-center"><svg width="18" height="18" viewBox="0 0 18 18"><path d="M0 3H6M3 0V6" stroke="#333"/><rect x="4.500" y="6.500" width="9" height="8" fill="#ddd" stroke="#444"/><rect x="9" y="10" width="8" height="7" fill="#6fae4f" stroke="#1c5c14"/></svg></div>

    <div class="ml-auto w-[29px] h-full border-x border-[#555] bg-gradient-to-b from-[#d2d2d2] to-[#a0a0a0] text-black text-center leading-[21px]">模型</div>
    <div class="w-[22px] border-r border-[#555] bg-gradient-to-b from-[#cfcfcf] to-[#9a9a9a] flex items-center justify-center"><svg width="18" height="18" viewBox="0 0 18 18"><rect x="2.500" y="1.500" width="13" height="12" fill="#f3f3f3" stroke="#333"/><path d="M6 4V11H12Z" fill="#555"/><path d="M1 16H17" stroke="#333" stroke-width="2"/></svg></div>
    <div class="w-[22px] border-r border-[#555] bg-gradient-to-b from-[#cfcfcf] to-[#9a9a9a] flex items-center justify-center"><svg width="18" height="18" viewBox="0 0 18 18"><rect x="1.500" y="1.500" width="7" height="10" fill="#f3f3f3" stroke="#333"/><rect x="9.500" y="1.500" width="7" height="10" fill="#f3f3f3" stroke="#333"/><path d="M1 15H17" stroke="#333" stroke-width="2"/></svg></div>
    <div class="w-[12px] border-r border-[#555]"></div>
    <div class="w-[51px] border-r border-[#555] bg-gradient-to-b from-[#cfcfcf] to-[#9a9a9a] flex items-center pl-[3px] gap-[2px] text-[#111]">
      <svg width="16" height="16" viewBox="0 0 16 16"><path d="M8 1L10 8L15 14L8 11L1 14L6 8Z" fill="#eee" stroke="#333"/></svg><span class="font-['DejaVu_Sans',sans-serif] text-[11px]">1:1</span><svg width="7" height="4"><path d="M0 0H7L3.500 4Z" fill="#111"/></svg>
    </div>
    <div class="w-[22px] border-r border-[#555] bg-gradient-to-b from-[#cfcfcf] to-[#9a9a9a] flex items-center justify-center"><svg width="16" height="16" viewBox="0 0 16 16"><path d="M6 1L8 8L12 14L6 11L1 14L4 8Z" fill="#eee" stroke="#333"/><circle cx="12" cy="9" r="2.500" fill="#f2a12c"/></svg></div>
    <div class="w-[22px] border-r border-[#555] bg-gradient-to-b from-[#cfcfcf] to-[#9a9a9a] flex items-center justify-center"><svg width="16" height="16" viewBox="0 0 16 16"><path d="M8 1L10 8L15 14L8 11L1 14L6 8Z" fill="#aaa" stroke="#888"/></svg></div>
    <div class="w-[6px] border-r border-[#555]"></div>
    <div class="w-[22px] border-r border-[#555] bg-gradient-to-b from-[#cfcfcf] to-[#9a9a9a] flex items-center justify-center"><svg width="17" height="17" viewBox="0 0 17 17"><circle cx="8.500" cy="8.500" r="5.500" fill="#ddd" stroke="#111" stroke-width="2" stroke-dasharray="3 1"/><circle cx="8.500" cy="8.500" r="2.500" fill="#fff" stroke="#111"/></svg></div>
    <div class="w-[22px] border-r border-[#555] bg-gradient-to-b from-[#cfcfcf] to-[#9a9a9a] flex items-center justify-center"><svg width="16" height="16" viewBox="0 0 16 16"><rect x="1.500" y="7.500" width="9" height="8" fill="#f2f2f2" stroke="#111"/><path d="M7 7V4A3 3 0 0 1 14 4V7" fill="none" stroke="#111" stroke-width="1.500"/></svg></div>
    <div class="w-[22px] border-r border-[#555] bg-gradient-to-b from-[#cfcfcf] to-[#9a9a9a] flex items-center justify-center"><svg width="18" height="16" viewBox="0 0 18 16"><rect x="1.500" y="3.500" width="11" height="7" fill="#555" stroke="#222"/><path d="M3 1V3M6 1V3M9 1V3M3 11V13M6 11V13M9 11V13" stroke="#333"/><circle cx="13" cy="10" r="3.500" fill="#b8dcf4" stroke="#1b6cab"/></svg></div>
    <div class="w-[55px] bg-[#6f6f6f] border-r border-[#555] flex items-center justify-center"><div class="w-[44px] h-[18px] bg-[#9a9a9a] flex items-center justify-center gap-[9px]"><svg width="16" height="16" viewBox="0 0 16 16"><path d="M2 15L9 6A4 4 0 0 1 14 1L11 4L13 6L15 3A4 4 0 0 1 10 8L4 15Z" fill="#fff" stroke="#222" stroke-width=".7"/></svg><svg width="11" height="16" viewBox="0 0 11 16"><path d="M5.500 1A5 5 0 0 1 8 10V14H3V10A5 5 0 0 1 5.500 1Z" fill="#fde69a" stroke="#555" stroke-width=".6"/></svg></div></div>
    <div class="w-[11px] border-r border-[#555] flex items-center justify-center"><svg width="6" height="4"><path d="M0 0H6L3 4Z" fill="#111"/></svg></div>
    <div class="w-[22px] border-r border-[#555] bg-gradient-to-b from-[#cfcfcf] to-[#9a9a9a] flex items-center justify-center"><div class="w-[15px] h-[15px] border border-[#222] bg-[#f3f3f3] border-t-[3px]"></div></div>
    <div class="w-[18px] flex items-end justify-end pb-[1px] pr-[1px]"><svg width="12" height="12" viewBox="0 0 12 12"><path d="M10 1H12V3H10ZM6 5H8V7H6ZM10 5H12V7H10ZM2 9H4V11H2ZM6 9H8V11H6ZM10 9H12V11H10Z" fill="#ddd"/></svg></div>
  </footer>
</div>
</body>
</html>
